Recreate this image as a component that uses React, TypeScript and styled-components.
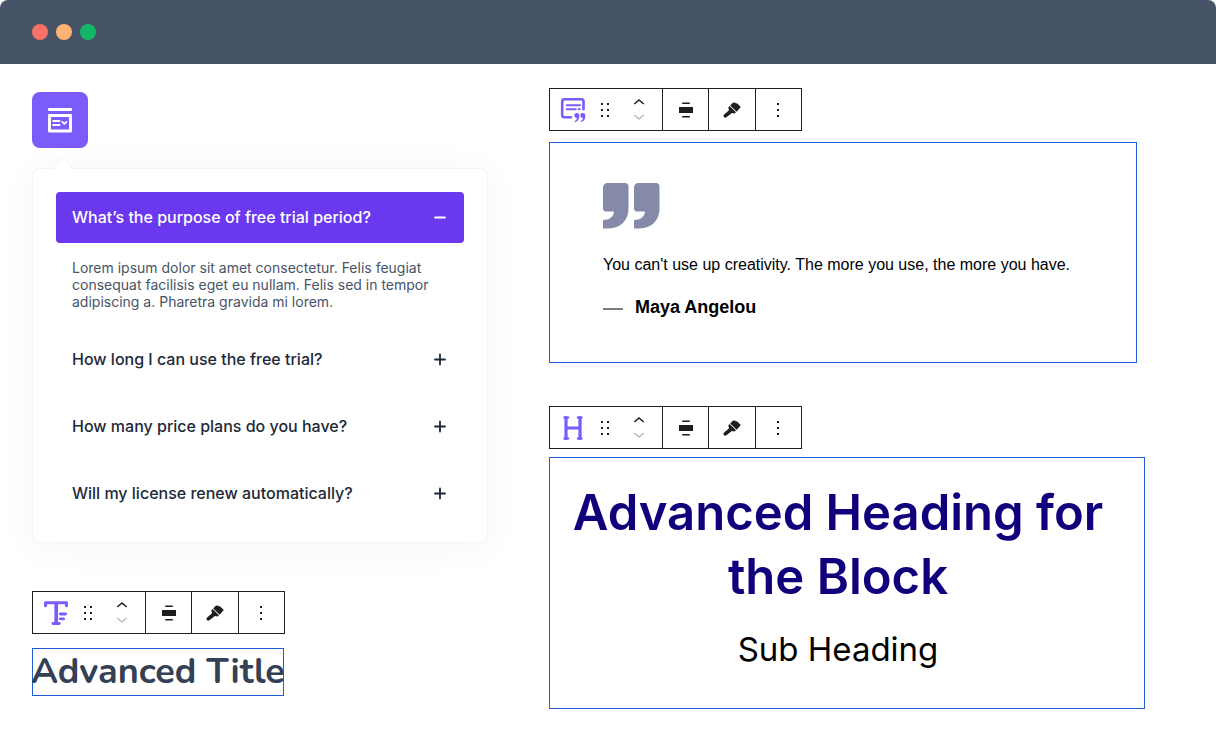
import React, { useState } from "react";
import styled, { createGlobalStyle } from "styled-components";

const GlobalStyle = createGlobalStyle`
  *, *::before, *::after { box-sizing: border-box; }
  body { margin: 0; background: #fff; font-family: Inter, "Liberation Sans", sans-serif; }
  h1, h2, h3, p, blockquote, figure { margin: 0; }
  button { font: inherit; color: inherit; background: none; border: 0; padding: 0; cursor: pointer; }
  svg { display: block; }
`;

const TitleBar = styled.header`
  display: flex;
  align-items: center;
  gap: 8px;
  height: 64px;
  padding: 0 32px;
  background: #475467;
  border-radius: 8px 8px 0 0;
`;

const Dot = styled.span<{ $color: string }>`
  width: 16px;
  height: 16px;
  border-radius: 50%;
  background: ${(p) => p.$color};
`;

const Page = styled.main`
  display: grid;
  grid-template-columns: 456fr 596fr;
  align-items: start;
  gap: 61px;
  padding: 24px 71px 45px 32px;
`;

const LeftColumn = styled.div`
  display: flex;
  flex-direction: column;
  align-items: flex-start;
  padding-top: 4px;
`;

const RightColumn = styled.div`
  display: flex;
  flex-direction: column;
  gap: 43px;
`;

const Block = styled.section<{ $gap: number }>`
  display: flex;
  flex-direction: column;
  align-items: flex-start;
  gap: ${(p) => p.$gap}px;
`;

const Tile = styled.button`
  display: grid;
  place-items: center;
  width: 56px;
  height: 56px;
  border-radius: 8px;
  background: #7b5cfa;
`;

const Card = styled.div`
  position: relative;
  display: flex;
  flex-direction: column;
  gap: 16px;
  width: 100%;
  margin: 20px 0 48px;
  padding: 23px;
  background: #fff;
  border: 1px solid #f2f4f7;
  border-radius: 8px;
  box-shadow: 0 4px 40px rgba(16, 24, 40, 0.04);
`;

const Pointer = styled.svg`
  position: absolute;
  top: -14px;
  left: 18px;
`;

const Question = styled.button<{ $open: boolean }>`
  display: flex;
  align-items: center;
  justify-content: space-between;
  width: 100%;
  padding: 16px;
  border-radius: 4px;
  font-size: 16px;
  line-height: 19px;
  font-weight: 500;
  text-align: left;
  color: ${(p) => (p.$open ? "#fff" : "#1d2939")};
  background: ${(p) => (p.$open ? "#6938ef" : "transparent")};
`;

const Answer = styled.p`
  padding: 16px 16px 8px;
  font-size: 14px;
  line-height: 17px;
  color: #475467;
`;

const Bar = styled.div`
  display: grid;
  grid-template-columns: 112px repeat(3, 1fr);
  width: 253px;
  height: 43px;
  border: 1px solid #1e1e1e;
  background: #fff;
`;

const BarGroup = styled.div`
  display: flex;
  align-items: center;
  padding-left: 10px;
`;

const BarButton = styled.button`
  display: grid;
  place-items: center;
  border-left: 1px solid #1e1e1e;
`;

const IconButton = styled.button<{ $width: number }>`
  display: grid;
  place-items: center;
  width: ${(p) => p.$width}px;
`;

const Movers = styled.div`
  display: grid;
  gap: 9px;
  margin-left: 9px;
`;

const AdvancedTitle = styled.h1`
  display: flex;
  justify-content: center;
  width: 252px;
  height: 48px;
  border: 1px solid #1d5fd8;
  font-family: Nunito, Lato, sans-serif;
  font-size: 36px;
  line-height: 46px;
  font-weight: 700;
  white-space: nowrap;
  color: #344054;
`;

const Quote = styled.figure`
  align-self: stretch;
  margin-right: 8px;
  padding: 39px 53px 43px;
  border: 1px solid #1d5fd8;
  font-family: "Liberation Sans", Arial, sans-serif;
  color: #000;
`;

const QuoteText = styled.blockquote`
  margin-top: 24px;
  font-size: 16px;
  line-height: 24px;
`;

const Author = styled.figcaption`
  display: flex;
  align-items: center;
  gap: 12px;
  margin-top: 18px;
  font-size: 18px;
  line-height: 24px;
  font-weight: 700;
  &::before {
    content: "";
    width: 20px;
    height: 2px;
    margin-top: 4px;
    background: #7d7d7d;
  }
`;

const HeadingPanel = styled.div`
  align-self: stretch;
  padding: 23px 34px 35px 16px;
  border: 1px solid #1d5fd8;
  text-align: center;
`;

const Heading = styled.h2`
  font-size: 49px;
  line-height: 64px;
  font-weight: 600;
  color: #11007b;
`;

const SubHeading = styled.h3`
  margin-top: 16px;
  font-size: 33px;
  line-height: 48px;
  font-weight: 400;
  color: #000;
`;

const AccordionIcon = () => (
  <svg width="24" height="25" viewBox="0 0 24 25" aria-hidden="true">
    <rect width="24" height="3" rx="1" y="0" fill="#fff" />
    <path fillRule="evenodd" fill="#fff" d="M1 6h22a1 1 0 0 1 1 1v16a1.500 1.500 0 0 1-1.500 1.500h-21A1.500 1.500 0 0 1 0 23V7a1 1 0 0 1 1-1Zm2.500 3a.5.5 0 0 0-.5.5v11.500a.5.5 0 0 0 .5.500h17a.5.5 0 0 0 .5-.5V9.500a.5.5 0 0 0-.5-.5Z" />
    <path d="M5.200 13h6.300M5.200 17h6.300" stroke="#fff" strokeWidth="1.900" strokeLinecap="round" />
    <path d="m14.300 13.800 2.100 2.100 2.100-2.100" stroke="#fff" strokeWidth="1.700" fill="none" strokeLinecap="round" />
  </svg>
);

const QuoteBlockIcon = () => (
  <svg width="26" height="26" viewBox="0 0 26 26" fill="none" stroke="#7b5cfa" aria-hidden="true">
    <path d="M11 20.200H4A2 2 0 0 1 2.200 18.200V4.200A2 2 0 0 1 4.200 2.200h17.300A2 2 0 0 1 23.500 4.200v8" strokeWidth="2.600" strokeLinecap="round" />
    <path d="M6.700 8.300h13.300M6.700 12.300h9M18.700 12.300h1" strokeWidth="2" strokeLinecap="round" />
    {[14.3, 20.3].map((x) => (
      <path key={x} transform={`translate(${x} 16)`} d="M2.400 0A2.500 2.500 0 0 1 5 2.600C5.200 6.200 3.700 8.300 1.400 9 .5 9.200.1 8.100.9 7.700 2 7 2.600 6.200 2.600 5A2.500 2.500 0 0 1 2.400 0Z" fill="#7b5cfa" stroke="none" />
    ))}
  </svg>
);

const HeadingBlockIcon = () => (
  <svg width="26" height="26" viewBox="0 0 26 26" fill="none" stroke="#7b5cfa" strokeLinecap="round" aria-hidden="true">
    <path d="M6 2.500v21M20 2.500v21M6 13h14" strokeWidth="3.200" />
    <path d="M4.700 2.500h3.200M18.100 2.500h3.200M4.700 23.500h3.200M18.100 23.500h3.200" strokeWidth="2.700" />
  </svg>
);

const TitleBlockIcon = () => (
  <svg width="26" height="26" viewBox="0 0 26 26" fill="none" stroke="#7b5cfa" strokeLinecap="round" strokeLinejoin="round" aria-hidden="true">
    <path d="M2.500 5.800V2.800H23.500V5.800" strokeWidth="3" />
    <path d="M13.200 3v20.500" strokeWidth="3.700" strokeLinecap="butt" />
    <path d="M10 23.500h6.300M17.300 14h5.400M17.300 18.800h3.400" strokeWidth="2.800" />
  </svg>
);

const GripIcon = () => (
  <svg width="10" height="16" viewBox="0 0 10 16" fill="#1e1e1e" aria-hidden="true">
    {[1, 7, 13].map((y) => (
      <React.Fragment key={y}>
        <rect x="1" y={y} width="2" height="2" />
        <rect x="7" y={y} width="2" height="2" />
      </React.Fragment>
    ))}
  </svg>
);

const Chevron = ({ down }: { down?: boolean }) => (
  <svg width="12" height="6" viewBox="0 0 12 6" fill="none" stroke={down ? "#bcbcbc" : "#1e1e1e"} strokeWidth="1.500" aria-hidden="true">
    <path d={down ? "M1.300 1 6 5l4.700-4" : "M1.300 5 6 1l4.700 4"} />
  </svg>
);

const AlignIcon = () => (
  <svg width="14" height="16" viewBox="0 0 14 16" aria-hidden="true">
    <rect y="5" width="14" height="6" fill="#1e1e1e" />
    <path d="M3.200 1.200h7.600M3.200 14.800h7.600" stroke="#1e1e1e" strokeWidth="1.500" />
  </svg>
);

const BrushIcon = () => (
  <svg width="18" height="16" viewBox="0 0 18 16" fill="#1e1e1e" aria-hidden="true">
    <path d="M9.800.8 12 .6 13 1.500 14 1.300 17.800 4.900 13.700 9.700 7.200 3.500Z" />
    <path d="M6.600 4.100 13 10.200 11.500 11.400 8.900 10.900 3.400 15.300Q2 16.300.9 15.100-.1 13.900 1.200 12.600L6 8.200 5.300 5.500Z" />
  </svg>
);

const MoreIcon = () => (
  <svg width="4" height="16" viewBox="0 0 4 16" fill="#1e1e1e" aria-hidden="true">
    <rect x="1" y="1" width="2" height="2" />
    <rect x="1" y="7" width="2" height="2" />
    <rect x="1" y="13" width="2" height="2" />
  </svg>
);

const ToggleIcon = ({ open }: { open: boolean }) => (
  <svg width="16" height="15" viewBox="0 0 16 15" stroke={open ? "#fff" : "#1d2939"} strokeWidth="1.800" strokeLinecap="round" aria-hidden="true">
    <path d={open ? "M3 7.500h10" : "M3 7.500h10M8 2.500v10"} />
  </svg>
);

const QuoteMark = () => (
  <svg width="57" height="47" viewBox="0 0 57 47" fill="#868aa9" aria-hidden="true">
    {[0, 31].map((x) => (
      <path key={x} transform={`translate(${x} 0)`} d="M4.500 1H22a3.500 3.500 0 0 1 3.500 3.500V27c0 11-8 19.500-20 19.500H0V38c6.500 0 10.500-3 11-8.500H3A3 3 0 0 1 0 26.500v-21A4.500 4.500 0 0 1 4.500 1Z" />
    ))}
  </svg>
);

const Toolbar = ({ name, icon }: { name: string; icon: React.ReactNode }) => (
  <Bar role="toolbar" aria-label={name}>
    <BarGroup>
      <IconButton $width={26} aria-label={name}>{icon}</IconButton>
      <IconButton $width={38} aria-label="Drag"><GripIcon /></IconButton>
      <Movers>
        <IconButton $width={12} aria-label="Move up"><Chevron /></IconButton>
        <IconButton $width={12} aria-label="Move down"><Chevron down /></IconButton>
      </Movers>
    </BarGroup>
    <BarButton aria-label="Align"><AlignIcon /></BarButton>
    <BarButton aria-label="Styles"><BrushIcon /></BarButton>
    <BarButton aria-label="Options"><MoreIcon /></BarButton>
  </Bar>
);

const faqs = [
  {
    question: "What’s the purpose of free trial period?",
    answer:
      "Lorem ipsum dolor sit amet consectetur. Felis feugiat consequat facilisis eget eu nullam. Felis sed in tempor adipiscing a. Pharetra gravida mi lorem.",
  },
  { question: "How long I can use the free trial?" },
  { question: "How many price plans do you have?" },
  { question: "Will my license renew automatically?" },
];

export default function App() {
  const [openIndex, setOpenIndex] = useState(0);
  return (
    <>
      <GlobalStyle />
      <TitleBar>
        <Dot $color="#f97066" />
        <Dot $color="#feb273" />
        <Dot $color="#12b76a" />
      </TitleBar>
      <Page>
        <LeftColumn>
          <Tile aria-label="Accordion"><AccordionIcon /></Tile>
          <Card>
            <Pointer width="24" height="15" viewBox="0 0 24 15" aria-hidden="true">
              <path d="M1 14.500 10 3Q11.500 1 13 3L22 14.500" fill="#fff" stroke="#f2f4f7" />
              <path d="M1 14h21v1H1Z" fill="#fff" />
            </Pointer>
            {faqs.map((faq, i) => {
              const open = i === openIndex;
              return (
                <div key={faq.question}>
                  <Question $open={open} aria-expanded={open} onClick={() => setOpenIndex(open ? -1 : i)}>
                    {faq.question}
                    <ToggleIcon open={open} />
                  </Question>
                  {open && faq.answer && <Answer>{faq.answer}</Answer>}
                </div>
              );
            })}
          </Card>
          <Block $gap={14}>
            <Toolbar name="Advanced title" icon={<TitleBlockIcon />} />
            <AdvancedTitle>Advanced Title</AdvancedTitle>
          </Block>
        </LeftColumn>
        <RightColumn>
          <Block $gap={11}>
            <Toolbar name="Quote" icon={<QuoteBlockIcon />} />
            <Quote>
              <QuoteMark />
              <QuoteText>You can't use up creativity. The more you use, the more you have.</QuoteText>
              <Author>Maya Angelou</Author>
            </Quote>
          </Block>
          <Block $gap={8}>
            <Toolbar name="Advanced heading" icon={<HeadingBlockIcon />} />
            <HeadingPanel>
              <Heading>Advanced Heading for the Block</Heading>
              <SubHeading>Sub Heading</SubHeading>
            </HeadingPanel>
          </Block>
        </RightColumn>
      </Page>
    </>
  );
}
